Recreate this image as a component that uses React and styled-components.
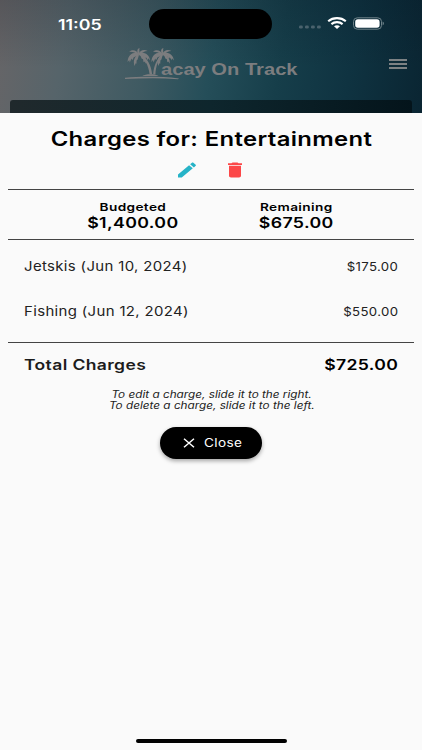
import React from "react";
import styled, { createGlobalStyle } from "styled-components";

const GlobalStyle = createGlobalStyle`
    * {
        box-sizing: border-box;
    }

    body {
        margin: 0;
        background: #fafafa;
        color: #000;
        font-family: Inter, "Liberation Sans", sans-serif;
    }
`;

const Screen = styled.div`
    height: 750px;
    display: flex;
    flex-direction: column;
    overflow: hidden;
`;

const Header = styled.header`
    height: 113px;
    display: flex;
    flex-direction: column;
    flex-shrink: 0;
    background:
        linear-gradient(180deg, rgba(0, 8, 20, 0.16), rgba(0, 8, 20, 0) 60%),
        linear-gradient(
            99deg,
            #676567 0%,
            #56646a 16%,
            #3f5a62 35%,
            #254e59 50%,
            #163e4a 66%,
            #0f3341 82%,
            #0a2532 100%
        );
`;

// The type is set wide: every label is drawn with a horizontal stretch
const Text = styled.span`
    display: block;
    white-space: nowrap;
    font-size: ${(props) => props.$size}px;
    font-weight: ${(props) => props.$weight || 400};
    font-style: ${(props) => (props.$italic ? "italic" : "normal")};
    line-height: ${(props) => props.$line || props.$size}px;
    letter-spacing: ${(props) => props.$spacing || 0}px;
    color: ${(props) => props.$color || "#000"};
    transform: scaleX(${(props) => props.$wide || 1.2});
    transform-origin: ${(props) => props.$origin || "center"};
`;

const StatusBar = styled.div`
    height: 48px;
    display: grid;
    grid-template-columns: 149px 123px 1fr;
    align-items: center;

    > .time {
        padding: 1px 0 0 58px;
    }
`;

const Island = styled.div`
    height: 30px;
    border-radius: 15px;
    background: #000;
`;

const Indicators = styled.div`
    display: flex;
    align-items: center;
    gap: 6px;
    padding: 0 0 2px 27px;

    > svg:first-child {
        margin-top: 8px;
    }
`;

const NavBar = styled.div`
    height: 52px;
    display: flex;
    align-items: flex-start;
    padding-left: 124px;
`;

const LogoText = styled.div`
    margin: 13px 0 0 -21px;
    font-family: "Liberation Sans", sans-serif;
`;

const Burger = styled.div`
    margin: 11px 15px 0 auto;
    display: flex;
    flex-direction: column;
    gap: 2.5px;

    > i {
        width: 18px;
        height: 1.5px;
        background: #7d8284;
    }
`;

const BackCard = styled.div`
    flex: 1;
    margin: 0 10px;
    border-radius: 3px 3px 0 0;
    background: linear-gradient(90deg, #20292c, #0e262d 50%, #04141b);
`;

const Sheet = styled.main`
    flex: 1;
    display: flex;
    flex-direction: column;
    padding: 15px 8px 0;
    background: #fafafa;
`;

const Actions = styled.div`
    height: 20px;
    margin: 10px 0 9px;
    padding-right: 1px;
    display: flex;
    justify-content: center;
    align-items: center;
    gap: 24px;
`;

const Centered = styled.div`
    display: flex;
    flex-direction: column;
    align-items: center;
`;

const Summary = styled.section`
    height: 51px;
    padding: 11px 36px 0 43px;
    display: grid;
    grid-template-columns: 1fr 1fr;
    border-top: 1px solid #444;
    border-bottom: 1px solid #444;
`;

const Charges = styled.section`
    height: 103px;
    padding-top: 5px;
    border-bottom: 1px solid #444;
`;

const Row = styled.div`
    height: ${(props) => props.$height || 45}px;
    padding: 0 16px;
    display: flex;
    justify-content: space-between;
    align-items: center;
`;

const Hint = styled(Centered)`
    padding: 2px 0 0 1px;
`;

const CloseButton = styled.button`
    width: 102px;
    height: 32px;
    margin: 15.5px auto 0;
    padding: 0 0 0 23px;
    display: flex;
    align-items: center;
    gap: 9px;
    border: 0;
    border-radius: 16px;
    background: #000;
    box-shadow: 0 2px 4px rgba(0, 0, 0, 0.35);
    font-family: inherit;
`;

const HomeBar = styled.div`
    width: 151px;
    height: 4px;
    margin: auto auto 7px;
    border-radius: 2px;
    background: #000;
`;

const SignalIcon = () => (
    <svg width="22" height="4" viewBox="0 0 22 4" fill="#4a626d">
        {[0, 6, 12, 18].map((x) => (
            <rect key={x} x={x} y="0.5" width="3.8" height="3" rx="1.3" />
        ))}
    </svg>
);

const WifiIcon = () => (
    <svg width="20" height="12" viewBox="0 0 20 12" fill="none" stroke="#fff" strokeWidth="2.1">
        <path d="M1.2 4.3C6 0.1 14 0.1 18.8 4.3" />
        <path d="M4.4 7.1C7.5 4.5 12.5 4.5 15.6 7.1" />
        <path d="M7 9.3C8.8 7.8 11.2 7.8 13 9.3L10 11.9Z" fill="#fff" stroke="none" />
    </svg>
);

const BatteryIcon = () => (
    <svg width="32" height="13" viewBox="0 0 32 13">
        <rect x="0.5" y="0.8" width="28" height="11.4" rx="3.8" fill="none" stroke="#6f838a" />
        <rect x="2.2" y="2.3" width="24.4" height="8.4" rx="2.6" fill="#fff" />
        <path d="M29.6 4.6C31.4 5.2 31.4 7.8 29.6 8.4Z" fill="#6f838a" />
    </svg>
);

const Crown = () => (
    <>
        <path d="M0 1.5C-2 -2.2 -6 -3.4 -9.4 -.6C-6 -.8 -3.4 .2 0 2.8Z" />
        <path d="M0 1C-5 -.8 -10.6 2 -11 9.6L-9.4 7.6L-8.8 10L-7.2 6L-6.4 7.8L-4.8 4.8L0 2.8Z" />
        <path d="M0 1.6C-3.6 3.8 -6 8 -4 13.6L-3 10.8L-2.2 11.4L-2 8L-1 7.2L.2 3Z" />
        <path d="M-.6 1.6C-2 -1.6 -1.4 -3.6 1 -4.4C.4 -3 1 -1 1 1.6Z" />
        <path d="M0 1.5C1.6 -2.4 5.6 -3.6 9 -1.4C6 -1.2 3.6 0 .8 2.8Z" />
        <path d="M0 1C5 -.8 10.8 1.6 11.4 8L9.6 5.8L9.2 7.8L7.4 4.8L6.6 6.4L4.6 4L.4 2.8Z" />
        <path d="M1 1.6C5 3 8.2 7 7.2 11.4L6 9L5 9.8L4.4 6.6L3.2 6.4Z" />
    </>
);

const PalmIcon = () => (
    <svg width="58" height="34" viewBox="0 0 58 34" fill="#7c7d7f">
        <g transform="translate(14.6 4.4)">
            <Crown />
        </g>
        <g transform="translate(38.4 4.4)">
            <Crown />
        </g>
        <path d="M15 6C20.5 10.5 24.6 17 25.6 26.5H28.2C27.2 17 23 9.5 16 5.4Z" />
        <path d="M38.2 5.8C33 10.5 29.6 18 29.2 26.5H31.4C31.8 18 34.4 11 39.2 6.8Z" />
        <path d="M18.4 28C21 25.6 31.6 25.6 34.6 28Z" />
        <path d="M1 29.7C16 28.5 36 28.3 55 30.4L54 31.2C36 29.8 18 30.4 1 30.9Z" />
    </svg>
);

const PencilIcon = () => (
    <svg width="24" height="20" viewBox="0 0 24 24" preserveAspectRatio="none" fill="#26b3c7">
        <path d="M3 17.25V21h3.75L17.81 9.94l-3.75-3.75L3 17.25zM20.71 7.04c.39-.39.39-1.02 0-1.41l-2.34-2.34c-.39-.39-1.02-.39-1.41 0l-1.83 1.83 3.75 3.75 1.83-1.83z" />
    </svg>
);

const TrashIcon = () => (
    <svg width="24" height="20" viewBox="0 0 24 24" preserveAspectRatio="none" fill="#fc4748">
        <path d="M6 19c0 1.1.9 2 2 2h8c1.1 0 2-.9 2-2V7H6v12zM19 4h-3.5l-1-1h-5l-1 1H5v2h14V4z" />
    </svg>
);

const CloseIcon = () => (
    <svg width="12" height="10" viewBox="0 0 12 10" stroke="#fff" strokeWidth="1.5">
        <path d="M1 0.8L11 9.2M11 0.8L1 9.2" />
    </svg>
);

const charges = [
    { label: "Jetskis (Jun 10, 2024)", amount: "$175.00" },
    { label: "Fishing (Jun 12, 2024)", amount: "$550.00" },
];

const Total = ({ label, amount }) => (
    <Centered>
        <Text $size={11} $line={13} $weight={600} $spacing={0.3} $wide={1.24}>
            {label}
        </Text>
        <Text $size={14.3} $line={18} $weight={600} $spacing={0.3} $wide={1.24}>
            {amount}
        </Text>
    </Centered>
);

const App = () => {
    return (
        <Screen>
            <GlobalStyle />

            <Header>
                <StatusBar>
                    <div className="time">
                        <Text $size={14} $weight={600} $color="#fff" $wide={1.27} $origin="left">
                            11:05
                        </Text>
                    </div>
                    <Island />
                    <Indicators>
                        <SignalIcon />
                        <WifiIcon />
                        <BatteryIcon />
                    </Indicators>
                </StatusBar>

                <NavBar>
                    <PalmIcon />
                    <LogoText>
                        <Text $size={16.5} $weight={700} $color="#7c7d7f" $wide={1.22} $origin="left">
                            acay On Track
                        </Text>
                    </LogoText>
                    <Burger>
                        <i />
                        <i />
                        <i />
                    </Burger>
                </NavBar>

                <BackCard />
            </Header>

            <Sheet>
                <Centered>
                    <Text $size={19.5} $line={22} $weight={600} $spacing={0.3} $wide={1.223}>
                        Charges for: Entertainment
                    </Text>
                </Centered>

                <Actions>
                    <PencilIcon />
                    <TrashIcon />
                </Actions>

                <Summary>
                    <Total label="Budgeted" amount="$1,400.00" />
                    <Total label="Remaining" amount="$675.00" />
                </Summary>

                <Charges>
                    {charges.map(({ label, amount }) => (
                        <Row key={label}>
                            <Text $size={12.9} $color="#222" $spacing={0.3} $wide={1.16} $origin="left">
                                {label}
                            </Text>
                            <Text $size={11.6} $color="#222" $spacing={0.3} $wide={1.14} $origin="right">
                                {amount}
                            </Text>
                        </Row>
                    ))}
                </Charges>

                <Row $height={44}>
                    <Text $size={14} $line={16} $weight={600} $color="#1c1c1c" $spacing={0.3} $wide={1.25} $origin="left">
                        Total Charges
                    </Text>
                    <Text $size={14.3} $line={16} $weight={600} $spacing={0.3} $wide={1.23} $origin="right">
                        $725.00
                    </Text>
                </Row>

                <Hint>
                    <Text $size={9.7} $line={11} $italic $color="#222" $wide={1.213}>
                        To edit a charge, slide it to the right.
                    </Text>
                    <Text $size={9.7} $line={11} $italic $color="#222" $wide={1.213}>
                        To delete a charge, slide it to the left.
                    </Text>
                </Hint>

                <CloseButton>
                    <CloseIcon />
                    <Text $size={11.3} $line={12} $spacing={0.3} $color="#fff" $origin="left">
                        Close
                    </Text>
                </CloseButton>

                <HomeBar />
            </Sheet>
        </Screen>
    );
};

export default App;
